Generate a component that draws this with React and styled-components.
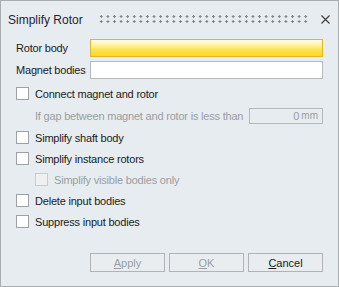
import styled, { createGlobalStyle } from "styled-components";

const GlobalStyle = createGlobalStyle`
  html, body {
    margin: 0;
    padding: 0;
    background: #e7ecf0;
  }
  body {
    font-family: "Liberation Sans", Arial, sans-serif;
  }
`;

const Dialog = () => {
    const options = [
        {label: "Simplify shaft body"},
        {label: "Simplify instance rotors"},
        {label: "Simplify visible bodies only", sub: true, disabled: true},
        {label: "Delete input bodies"},
        {label: "Suppress input bodies"},
    ];

    return (
        <Frame>
            <TitleBar>
                <Title>Simplify Rotor</Title>
                <Grip/>
                <Close>
                    <svg width="9" height="9" viewBox="0 0 9 9">
                        <path d="M0.5 0.5 L8.5 8.5 M8.5 0.5 L0.5 8.5" stroke="#3c3c3c" strokeWidth="1.1" fill="none"/>
                    </svg>
                </Close>
            </TitleBar>
            <Body>
                <FieldRow>
                    <Label>Rotor body</Label>
                    <Field $active/>
                </FieldRow>
                <FieldRow>
                    <Label>Magnet bodies</Label>
                    <Field/>
                </FieldRow>
                <CheckRow>
                    <Box/>
                    <CheckText>Connect magnet and rotor</CheckText>
                </CheckRow>
                <GapRow>
                    <CheckText $disabled>If gap between magnet and rotor is less than</CheckText>
                    <Spin><b>0</b> mm</Spin>
                </GapRow>
                {
                    options.map(o => (
                        <CheckRow key={o.label} $sub={o.sub}>
                            <Box $disabled={o.disabled}/>
                            <CheckText $disabled={o.disabled}>{o.label}</CheckText>
                        </CheckRow>
                    ))
                }
            </Body>
            <Footer>
                <Button $disabled><u>A</u>pply</Button>
                <Button $disabled><u>O</u>K</Button>
                <Button><u>C</u>ancel</Button>
            </Footer>
        </Frame>
    );
}

export default function App() {
    return (
        <>
            <GlobalStyle/>
            <Dialog/>
        </>
    );
}

const Frame = styled.div`
  display: flex;
  flex-direction: column;
  width: 339px;
  height: 287px;
  box-sizing: border-box;
  border: 1px solid #a8adb2;
  background: #e7ecf0;
  color: #1b1b1b;
`;

const TitleBar = styled.div`
  display: flex;
  align-items: center;
  height: 36px;
  padding: 0 8px 0 7px;
  box-sizing: border-box;
`;

const Title = styled.div`
  font-size: 12px;
  color: #1f1f33;
  padding-top: 2px;
`;

const Grip = styled.div`
  flex: 1;
  height: 10px;
  margin: 0 12px 0 15px;
  background-image: radial-gradient(circle, #7f8387 1.1px, transparent 1.4px);
  background-size: 6.6px 5px;
  background-position: 0 0;
`;

const Close = styled.div`
  display: flex;
  width: 9px;
  height: 9px;
`;

const Body = styled.div`
  display: flex;
  flex-direction: column;
  padding: 2px 15px 0 15px;
  font-size: 11px;
  letter-spacing: -0.2px;
`;

const FieldRow = styled.div`
  display: flex;
  align-items: center;
  height: 18px;
  margin-bottom: 4px;
`;

const Label = styled.div`
  width: 74px;
  flex: none;
`;

const Field = styled.div`
  flex: 1;
  height: 100%;
  box-sizing: border-box;
  border: 1px solid ${p => p.$active ? '#e0b62a' : '#b5b9bd'};
  background: ${p => p.$active
    ? 'linear-gradient(#fffbe0 0%, #fff5b8 25%, #ffe552 60%, #ffd71e 100%)'
    : '#ffffff'};
`;

const CheckRow = styled.div`
  display: flex;
  align-items: center;
  height: 21px;
  padding-left: ${p => p.$sub ? '19px' : '0'};
`;

const Box = styled.div`
  width: 13px;
  height: 13px;
  box-sizing: border-box;
  flex: none;
  border: 1px solid ${p => p.$disabled ? '#c9cccf' : '#9ea2a6'};
  background: ${p => p.$disabled ? '#eef0f2' : '#ffffff'};
  margin-right: 6px;
`;

const CheckText = styled.div`
  color: ${p => p.$disabled ? '#999da1' : '#1b1b1b'};
  white-space: nowrap;
`;

const GapRow = styled.div`
  display: flex;
  align-items: center;
  justify-content: space-between;
  height: 23px;
  padding-left: 19px;
`;

const Spin = styled.div`
  width: 74px;
  height: 16px;
  box-sizing: border-box;
  border: 1px solid #b5b9bd;
  color: #999da1;
  font-size: 10px;
  letter-spacing: 0;
  display: flex;
  align-items: center;
  justify-content: flex-end;
  padding-right: 4px;

  b {
    font-weight: normal;
    font-size: 11px;
    margin-right: 2px;
  }
`;

const Footer = styled.div`
  display: flex;
  justify-content: flex-end;
  gap: 4px;
  margin-top: auto;
  padding: 0 15px 14px 0;
`;

const Button = styled.div`
  display: flex;
  justify-content: center;
  align-items: center;
  width: 75px;
  height: 19px;
  box-sizing: border-box;
  border: 1px solid #b0b4b8;
  background: #e9edf0;
  font-size: 11px;
  color: ${p => p.$disabled ? '#9a9ea2' : '#1b1b1b'};
`;
